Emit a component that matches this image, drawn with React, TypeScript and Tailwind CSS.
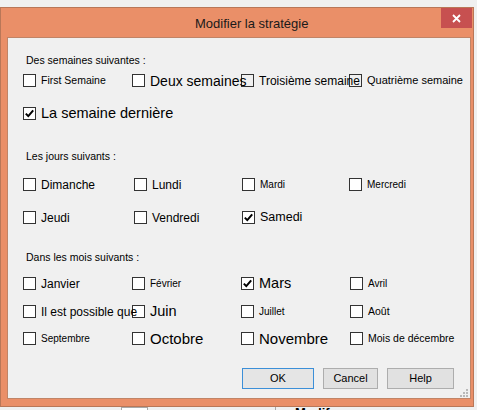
import React from "react";

type Item = {
  label: string;
  size: string;
  checked?: boolean;
  clear?: boolean;
  shift?: string;
};

function Check({ checked, clear }: { checked?: boolean; clear?: boolean }) {
  return (
    <span
      className={
        "relative z-0 flex h-[13px] w-[13px] shrink-0 items-center justify-center border border-[#333333] " +
        (clear ? "bg-transparent" : "bg-white")
      }
    >
      {checked && (
        <svg width="11" height="11" viewBox="0 0 11 11" fill="none" aria-hidden="true">
          <path d="M1.8 5.6L4.3 8.1L9.2 2.4" stroke="#000" strokeWidth="2" />
        </svg>
      )}
    </span>
  );
}

function Option({ item }: { item: Item }) {
  return (
    <div className={"flex h-[13px] items-center " + (item.shift ?? "")}>
      <Check checked={item.checked} clear={item.clear} />
      <span className={"relative z-10 ml-[5px] whitespace-nowrap leading-none text-black " + item.size}>
        {item.label}
      </span>
    </div>
  );
}

function Row({ items, top }: { items: Item[]; top: string }) {
  return (
    <div className={"grid grid-cols-[109px_109px_108px_1fr] " + top}>
      {items.map((it) => (
        <Option key={it.label} item={it} />
      ))}
    </div>
  );
}

function Label({ text, top }: { text: string; top: string }) {
  return <div className={"ml-[3px] h-[14px] text-[10.5px] leading-[14px] text-black " + top}>{text}</div>;
}

function Grip() {
  const dots = [
    [6, 0],
    [3, 3],
    [6, 3],
    [0, 6],
    [3, 6],
    [6, 6],
  ];
  return (
    <svg width="8" height="8" viewBox="0 0 8 8" aria-hidden="true">
      {dots.map(([x, y]) => (
        <rect key={x + "-" + y} x={x} y={y} width="2" height="2" fill="#b8b8b8" />
      ))}
    </svg>
  );
}

export default function App() {
  return (
    <div className="h-[410px] w-[477px] overflow-hidden bg-[#f0f0f0] font-['Liberation_Sans',Arial,sans-serif]">
      <div className="h-[7px]" />
      <div className="flex h-[400px] w-[474px] flex-col border border-[#b97758] bg-[#ea8f68]">
        {/* barre de titre */}
        <div className="flex h-[29px] items-start">
          <span className="ml-[194px] mt-[8px] text-[13px] leading-[15px] text-[#1a1a1a]">
            Modifier la stratégie
          </span>
          <div className="flex-1" />
          <button className="mr-[1px] flex h-[20px] w-[31px] items-center justify-center bg-[#c75050]" aria-label="Fermer">
            <svg width="9" height="9" viewBox="0 0 9 9" aria-hidden="true">
              <path d="M1 1L8 8M8 1L1 8" stroke="#fff" strokeWidth="1.8" />
            </svg>
          </button>
        </div>

        <div className="ml-[6px] flex h-[362px] w-[464px] flex-col border border-[#c08467] bg-[#f0f0f0] pl-[15px] pr-[15px]">
          <Label text="Des semaines suivantes :" top="mt-[15px]" />
          <Row
            top="mt-[7px]"
            items={[
              { label: "First Semaine", size: "text-[10.5px]" },
              { label: "Deux semaines", size: "text-[14px]" },
              { label: "Troisième semaine", size: "text-[12px]", clear: true },
              { label: "Quatrième semaine", size: "text-[11px]", clear: true },
            ]}
          />
          <Row top="mt-[20px]" items={[{ label: "La semaine dernière", size: "text-[14.5px]", checked: true }]} />

          <Label text="Les jours suivants :" top="mt-[29px]" />
          <Row
            top="mt-[15px]"
            items={[
              { label: "Dimanche", size: "text-[12px]" },
              { label: "Lundi", size: "text-[12px]", shift: "ml-[2px]" },
              { label: "Mardi", size: "text-[10px]", shift: "ml-[1px]" },
              { label: "Mercredi", size: "text-[10px]" },
            ]}
          />
          <Row
            top="mt-[20px]"
            items={[
              { label: "Jeudi", size: "text-[12px]" },
              { label: "Vendredi", size: "text-[12px]", shift: "ml-[2px]" },
              { label: "Samedi", size: "text-[12.5px]", checked: true, shift: "ml-[1px]" },
            ]}
          />

          <Label text="Dans les mois suivants :" top="mt-[26px]" />
          <Row
            top="mt-[13px]"
            items={[
              { label: "Janvier", size: "text-[12px]" },
              { label: "Février", size: "text-[10px]" },
              { label: "Mars", size: "text-[14.5px]", checked: true },
              { label: "Avril", size: "text-[10px]", shift: "ml-[1px]" },
            ]}
          />
          <Row
            top="mt-[15px]"
            items={[
              { label: "Il est possible que", size: "text-[12px]" },
              { label: "Juin", size: "text-[14.5px]" },
              { label: "Juillet", size: "text-[10px]" },
              { label: "Août", size: "text-[10.5px]", shift: "ml-[1px]" },
            ]}
          />
          <Row
            top="mt-[14px]"
            items={[
              { label: "Septembre", size: "text-[10px]" },
              { label: "Octobre", size: "text-[15px]" },
              { label: "Novembre", size: "text-[15px]" },
              { label: "Mois de décembre", size: "text-[10.5px]", shift: "ml-[1px]" },
            ]}
          />

          <div className="mt-[23px] flex items-start justify-end">
            <div className="flex gap-[9px] pr-[1px]">
              <button className="h-[21px] w-[72px] border border-[#3c8fd8] bg-[#e5e5e5] text-[11px] text-black">
                OK
              </button>
              <button className="h-[21px] w-[55px] border border-[#adadad] bg-[#e1e1e1] text-[11px] text-black">
                Cancel
              </button>
              <button className="h-[21px] w-[67px] border border-[#adadad] bg-[#e1e1e1] text-[11px] text-black">
                Help
              </button>
            </div>
          </div>
          <div className="mt-[0px] flex justify-end pr-0 -mr-[13px]">
            <Grip />
          </div>
        </div>
      </div>
      <div className="flex h-[3px] items-start overflow-hidden">
        <div className="ml-[121px] h-[6px] w-[27px] border border-[#a8a8a8] bg-white" />
        <div className="ml-[127px] h-[6px] w-px bg-[#a8a8a8]" />
        <span className="ml-[19px] text-[13px] font-bold leading-[12px] text-black">Modif</span>
      </div>
    </div>
  );
}
